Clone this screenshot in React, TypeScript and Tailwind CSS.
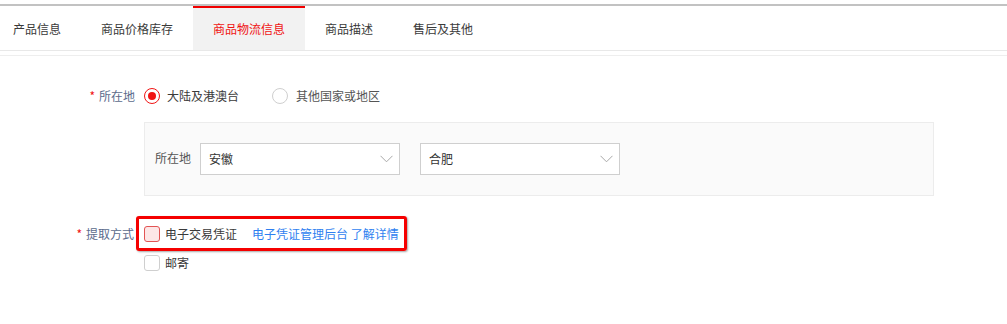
import React from "react";

const font = { fontFamily: '"Noto Sans CJK SC", "Noto Sans", sans-serif' };

function Chevron() {
  return (
    <svg width="13" height="8" viewBox="0 0 13 8" fill="none">
      <path d="M0.5 0.8 L6.5 6.8 L12.5 0.8" stroke="#a8a8a8" strokeWidth="1" />
    </svg>
  );
}

function Select({ value }: { value: string }) {
  return (
    <div className="flex h-[32px] w-[200px] items-center justify-between border border-[#cfcfcf] bg-white pl-[8px] pr-[6px] text-[12px] text-[#333]">
      <span>{value}</span>
      <Chevron />
    </div>
  );
}

export default function App() {
  const tabs = ["产品信息", "商品价格库存", "商品物流信息", "商品描述", "售后及其他"];
  return (
    <div className="h-[324px] w-full overflow-hidden bg-white text-[12px] text-[#3a3a3a]" style={font}>
      <div className="h-[4px]" />
      <div className="flex h-[47px] border-t-2 border-b border-t-[#c2c2c2] border-b-[#e8e8e8]">
        {tabs.map((t, i) => {
          const active = i === 2;
          return (
            <div
              key={t}
              className={
                active
                  ? "flex h-full items-center border-t-2 border-[#f10000] bg-[#f2f2f2] px-[20px] text-[#f01414]"
                  : i === 0
                  ? "flex h-full items-center border-t-2 border-transparent pl-[13px] pr-[20px]"
                  : "flex h-full items-center border-t-2 border-transparent px-[20px]"
              }
            >
              {t}
            </div>
          );
        })}
      </div>
      <div className="mt-[4px] h-px bg-[#eeeeee]" />

      <div className="pt-[28px]">
        {/* row 1 */}
        <div className="flex h-[24px] items-center">
          <div className="w-[144px] pr-[9px] text-right text-[#5b6b8c]">
            <span className="mr-[4px] text-[#f01414]">*</span>所在地
          </div>
          <div className="flex items-center">
            <span className="flex h-[16px] w-[16px] items-center justify-center rounded-full border-[1.5px] border-[#f01414] bg-white">
              <span className="h-[8px] w-[8px] rounded-full bg-[#f01414]" />
            </span>
            <span className="ml-[7px]">大陆及港澳台</span>
            <span className="ml-[33px] h-[16px] w-[16px] rounded-full border border-[#cfcfcf] bg-white" />
            <span className="ml-[8px] text-[#555]">其他国家或地区</span>
          </div>
        </div>

        {/* gray box */}
        <div className="ml-[144px] mt-[14px] flex h-[74px] w-[790px] items-center border border-[#ececec] bg-[#fafafa] pl-[10px]">
          <span className="mr-[9px] -mt-[3px] text-[#555]">所在地</span>
          <Select value="安徽" />
          <div className="w-[20px]" />
          <Select value="合肥" />
        </div>

        {/* row 2 */}
        <div className="mt-[20px] flex">
          <div className="flex h-[35px] w-[144px] items-center justify-end pr-[10px] text-[#5b6b8c]">
            <span className="mr-[4px] text-[#f01414]">*</span>提取方式
          </div>
          <div className="flex flex-col">
            <div className="relative flex h-[35px] items-center">
              <div className="pointer-events-none absolute left-[-8px] top-0 h-[35px] w-[271px] rounded-[3px] border-[3px] border-[#f50000] shadow-[1px_1px_2px_rgba(0,0,0,0.35)]" />
              <span className="h-[16px] w-[16px] rounded-[3px] border border-[#e25454] bg-[#fde6e6]" />
              <span className="ml-[5px]">电子交易凭证</span>
              <span className="ml-[15px] text-[#2f7ff0]">电子凭证管理后台 了解详情</span>
            </div>
            <div className="mt-[2px] flex h-[20px] items-center">
              <span className="h-[16px] w-[16px] rounded-[3px] border border-[#cfcfcf] bg-white" />
              <span className="ml-[5px]">邮寄</span>
            </div>
          </div>
        </div>
      </div>
    </div>
  );
}
